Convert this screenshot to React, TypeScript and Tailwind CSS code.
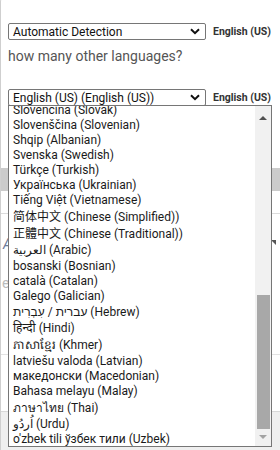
const LANGS: { label: string; h: number }[] = [
  { label: "Slovenčina (Slovak)", h: 15 },
  { label: "Slovenščina (Slovenian)", h: 15 },
  { label: "Shqip (Albanian)", h: 15 },
  { label: "Svenska (Swedish)", h: 15 },
  { label: "Türkçe (Turkish)", h: 15 },
  { label: "Українська (Ukrainian)", h: 15 },
  { label: "Tiếng Việt (Vietnamese)", h: 16 },
  { label: "简体中文 (Chinese (Simplified))", h: 18 },
  { label: "正體中文 (Chinese (Traditional))", h: 16 },
  { label: "العربية (Arabic)", h: 16 },
  { label: "bosanski (Bosnian)", h: 15 },
  { label: "català (Catalan)", h: 15 },
  { label: "Galego (Galician)", h: 16 },
  { label: "עברית / עִבְרִית (Hebrew)", h: 15 },
  { label: "हिन्दी (Hindi)", h: 17 },
  { label: "ភាសាខ្មែរ (Khmer)", h: 17 },
  { label: "latviešu valoda (Latvian)", h: 15 },
  { label: "македонски (Macedonian)", h: 15 },
  { label: "Bahasa melayu (Malay)", h: 16 },
  { label: "ภาษาไทย (Thai)", h: 17 },
  { label: "اُردُو (Urdu)", h: 15 },
  { label: "o'zbek tili ўзбек тили (Uzbek)", h: 15 },
];

const FONT = "font-['Roboto','Noto_Sans_CJK_SC','Noto_Sans',sans-serif]";

function Chevron() {
  return (
    <svg width="10" height="7" viewBox="0 0 10 7" className="shrink-0">
      <path d="M1 1.2l4 4 4-4" fill="none" stroke="#111" strokeWidth="2" />
    </svg>
  );
}

function SelectRow({ value }: { value: string }) {
  return (
    <div className="flex items-center gap-[7px]">
      <div className="flex h-[17px] w-[198px] items-center justify-between rounded-[2px] border border-[#767676] pl-[4px] pr-[5px] text-[12px] text-[#111]">
        <span className="leading-none">{value}</span>
        <Chevron />
      </div>
      <span className="text-[10.5px] font-bold text-[#333]">English (US)</span>
    </div>
  );
}

function Scrollbar() {
  return (
    <div className="absolute right-0 top-0 flex h-full w-[16px] flex-col items-center bg-[#f1f1f1]">
      <div className="flex h-[17px] shrink-0 items-center justify-center pt-[6px]">
        <div className="h-0 w-0 border-x-[4px] border-b-[4px] border-x-transparent border-b-[#505050]" />
      </div>
      <div className="h-[172px] shrink-0" />
      <div className="h-[134px] w-[13px] shrink-0 bg-[#a8a8a8]" />
      <div className="flex h-[17px] shrink-0 items-center justify-center pb-[2px]">
        <div className="h-0 w-0 border-x-[4px] border-t-[4px] border-x-transparent border-t-[#a3a3a3]" />
      </div>
    </div>
  );
}

export default function App() {
  return (
    <div className={`relative -mt-[6px] h-[456px] w-[280px] overflow-hidden rounded-tl-[8px] border-l border-t border-[#cfcfcf] bg-white ${FONT}`}>
      <div className="flex flex-col pl-[7px] pt-[28px]">
        <SelectRow value="Automatic Detection" />
        <p className="mt-[8px] text-[14px] leading-[17px] text-[#555]">how many other languages?</p>
        <div className="mt-[24px]">
          <SelectRow value="English (US) (English (US))" />
        </div>
      </div>

      {/* page behind the open list */}
      <div className="mt-[62px] h-[23px] w-full bg-[#cbcbcb]" />
      <div className="mt-[22px] h-px w-full bg-[#dcdcdc]" />
      <div className="flex justify-between pt-[20px] pl-[2px] pr-[4px]">
        <span className="text-[14px] italic text-[#6b7a99]">A</span>
        <div className="mt-[6px] h-0 w-0 border-l-[5px] border-t-[5px] border-l-transparent border-t-[#555]" />
      </div>
      <div className="pl-[1px] pt-[18px] text-[14px] text-[#bbb]">e</div>
      <div className="mt-[60px] h-px w-full bg-[#e3e3e3]" />
      <div className="mt-[56px] h-full w-full border-t border-[#d8d8d8] bg-[#efefef]" />

      {/* open select list */}
      <div className="absolute left-[7px] top-[110px] h-[342px] w-[264px] overflow-hidden border border-[#767676] bg-white">
        <div className="-mt-[4px] flex flex-col pl-[4px] text-[12px] text-[#1a1a1a]">
          {LANGS.map((l) => (
            <div key={l.label} className="flex items-center whitespace-nowrap leading-none" style={{ height: l.h }}>
              {l.label}
            </div>
          ))}
        </div>
        <Scrollbar />
      </div>
    </div>
  );
}
